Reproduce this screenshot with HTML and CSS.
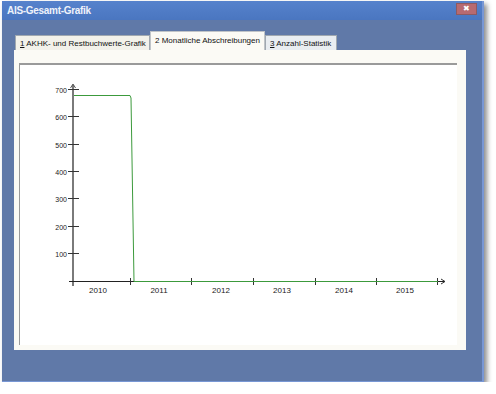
FILE: index.html
```html
<!DOCTYPE html>
<html lang="de">
<head>
    <meta charset="UTF-8">
    <title>AIS-Gesamt-Grafik</title>
    <link rel="stylesheet" href="styles.css">
</head>
<body>
    <div class="window">
        <div class="titlebar">
            <span class="title">AIS-Gesamt-Grafik</span>
            <span class="close">&#x2716;</span>
        </div>

        <div class="tabs">
            <div class="tab"><u>1</u> AKHK- und Restbuchwerte-Grafik</div>
            <div class="tab active">2 Monatliche Abschreibungen</div>
            <div class="tab last"><u>3</u> Anzahl-Statistik</div>
        </div>

        <div class="panel">
            <div class="chart">
                <svg width="438" height="281" viewBox="19 64 438 281">
                    <!-- y axis -->
                    <line x1="73" y1="86" x2="73" y2="287" stroke="#7a7a7a" stroke-width="2"/>
                    <path d="M70.5 89 L73 85 L75.5 89" fill="none" stroke="#555" stroke-width="1"/>
                    <g stroke="#333" stroke-width="1">
                        <line x1="68" y1="90.5" x2="79" y2="90.5"/>
                        <line x1="68" y1="117.5" x2="79" y2="117.5"/>
                        <line x1="68" y1="145.5" x2="79" y2="145.5"/>
                        <line x1="68" y1="172.5" x2="79" y2="172.5"/>
                        <line x1="68" y1="199.5" x2="79" y2="199.5"/>
                        <line x1="68" y1="227.5" x2="79" y2="227.5"/>
                        <line x1="68" y1="254.5" x2="79" y2="254.5"/>
                    </g>
                    <g class="ylabels" text-anchor="end">
                        <text x="67" y="93.5">700</text>
                        <text x="67" y="120.5">600</text>
                        <text x="67" y="148.5">500</text>
                        <text x="67" y="175.5">400</text>
                        <text x="67" y="202.5">300</text>
                        <text x="67" y="230.5">200</text>
                        <text x="67" y="257.5">100</text>
                    </g>

                    <!-- x axis -->
                    <line x1="69" y1="282.5" x2="445" y2="282.5" stroke="#222" stroke-width="1"/>
                    <path d="M441 280 L445 282.5 L441 285" fill="none" stroke="#333" stroke-width="1"/>
                    <g stroke="#333" stroke-width="1">
                        <line x1="130.5" y1="279" x2="130.5" y2="286"/>
                        <line x1="191.5" y1="279" x2="191.5" y2="286"/>
                        <line x1="253.5" y1="279" x2="253.5" y2="286"/>
                        <line x1="315.5" y1="279" x2="315.5" y2="286"/>
                        <line x1="376.5" y1="279" x2="376.5" y2="286"/>
                        <line x1="437.5" y1="279" x2="437.5" y2="286"/>
                    </g>

                    <!-- data -->
                    <path d="M74 96.5 L130 96.5 L131 99 L134 282.5 L438 282.5" fill="none" stroke="#3c9a3c" stroke-width="1"/>

                    <g class="xlabels" text-anchor="middle">
                        <text x="98" y="293.5">2010</text>
                        <text x="159" y="293.5">2011</text>
                        <text x="221" y="293.5">2012</text>
                        <text x="282" y="293.5">2013</text>
                        <text x="344" y="293.5">2014</text>
                        <text x="405" y="293.5">2015</text>
                    </g>
                </svg>
            </div>
        </div>
    </div>
</body>
</html>
```

FILE: styles.css
```css
body {
    margin: 0;
    background: #fff;
    font-family: "Liberation Sans", Arial, sans-serif;
}
.window {
    margin: 1px 0 0 2px;
    width: 482px;
    height: 381px;
    background-color: #6079a8;
    border-right: 2px solid #7897d4;
    border-bottom: 1px solid #7897d4;
    box-sizing: border-box;
    box-shadow: 3px 3px 5px rgba(0,0,0,0.45);
    overflow: hidden;
}
.titlebar {
    height: 19px;
    background: linear-gradient(#5682cc, #4a76c0);
    display: flex;
    align-items: center;
    justify-content: space-between;
    padding: 0 5px 0 5px;
}
.title {
    color: #eef2fa;
    font-weight: bold;
    font-size: 10px;
    letter-spacing: -0.3px;
}
.close {
    width: 19px;
    height: 10px;
    background: #b86a70;
    border: 1px solid #8d5a62;
    color: #fff;
    font-size: 8px;
    line-height: 10px;
    text-align: center;
    margin-top: -4px;
}
.tabs {
    display: flex;
    align-items: flex-end;
    margin: 12px 0 0 13px;
    height: 18px;
}
.tab {
    font-size: 8px;
    white-space: nowrap;
    overflow: hidden;
    color: #111;
    background: #f2f1ea;
    border: 1px solid #a0a8b0;
    border-bottom: none;
    height: 15px;
    line-height: 15px;
    padding: 0 0 0 4px;
    box-sizing: border-box;
}
.tab:first-child {
    width: 135px;
}
.tab.active {
    background: #fbfaf5;
    height: 19px;
    line-height: 18px;
    width: 115px;
    border-color: #c0c4c8;
}
.tab.last {
    background: #e9edf1;
    width: 72px;
}
.panel {
    margin-left: 12px;
    width: 452px;
    height: 300px;
    background: #fbfaf5;
    padding: 13px 0 0 5px;
    box-sizing: border-box;
}
.chart {
    width: 438px;
    height: 282px;
    background: #fff;
    border-top: 2px solid #9a9a9a;
    border-left: 1px solid #9a9a9a;
    box-sizing: border-box;
    overflow: hidden;
}
.chart svg {
    display: block;
    margin: -2px 0 0 -1px;
}
.ylabels text, .xlabels text {
    font-family: "Liberation Sans", Arial, sans-serif;
    fill: #222;
}
.ylabels text {
    font-size: 7px;
}
.xlabels text {
    font-size: 8px;
}
```
